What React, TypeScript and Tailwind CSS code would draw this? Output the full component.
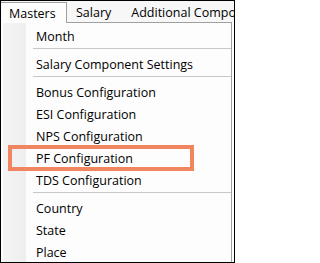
const items: (string | null)[] = [
  'Month',
  null,
  'Salary Component Settings',
  null,
  'Bonus Configuration',
  'ESI Configuration',
  'NPS Configuration',
  'PF Configuration',
  'TDS Configuration',
  null,
  'Country',
  'State',
  'Place',
];

export default function App() {
  return (
    <div
      className="relative w-[235px] h-[263px] overflow-hidden border border-black bg-white text-[12.5px] text-black"
      style={{ fontFamily: '"Open Sans", "Noto Sans", Arial, sans-serif' }}
    >
      {/* menu bar */}
      <div className="flex h-[21px] items-end bg-[#f7f7f7] whitespace-nowrap">
        <div className="relative z-10 -mb-px flex h-[21px] w-[66px] shrink-0 items-center border-t border-r border-[#a0a0a0] bg-[#fdfdfd] pl-[8px] pt-[2px]">
          Masters
        </div>
        <div className="flex h-[21px] shrink-0 items-center pl-[9px] pt-[3px]">Salary</div>
        <div className="flex h-[21px] shrink-0 items-center pl-[20px] pt-[3px]">Additional Components</div>
      </div>

      {/* dropdown */}
      <div className="flex w-[231px] h-[300px] border-t border-r border-[#a0a0a0] bg-[#fdfdfd]">
        <div className="ml-[2px] w-[23px] shrink-0 bg-gradient-to-r from-[#f4f4f4] to-[#eeeeee]" />
        <div className="flex-1 pt-px">
          {items.map((label, i) =>
            label === null ? (
              <div key={i} className="h-[6px] pt-[2px] pl-[7px]">
                <div className="h-px bg-[#c8c8c8]" />
              </div>
            ) : (
              <div key={i} className="flex h-[22px] items-center pl-[10px] pt-[4px] whitespace-nowrap">
                {label}
              </div>
            )
          )}
        </div>
      </div>

      {/* highlight annotation */}
      <div className="absolute left-[7px] top-[144px] w-[186px] h-[26px] border-4 border-[#f1855f]" />
    </div>
  );
}
